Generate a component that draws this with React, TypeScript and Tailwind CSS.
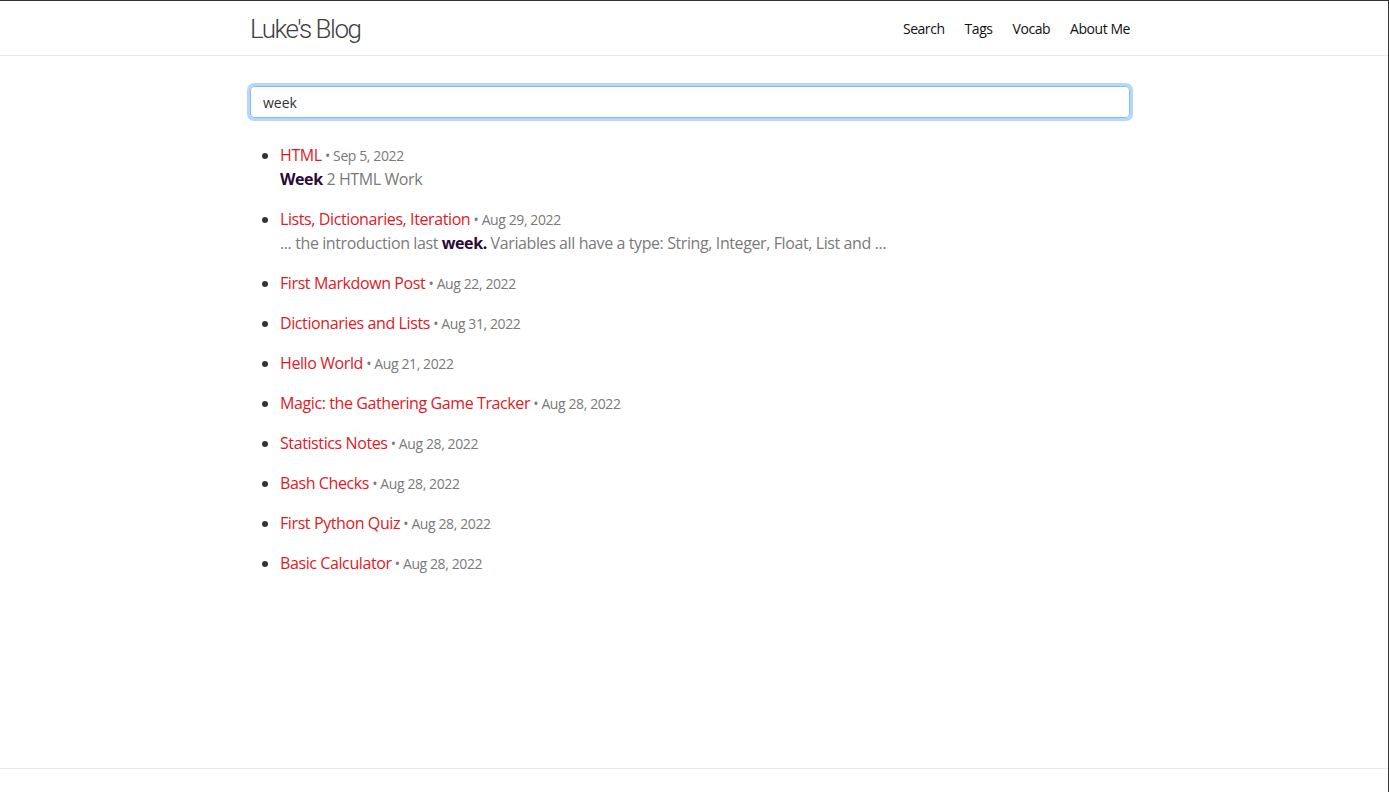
import { useState } from "react";

type Post = {
  title: string;
  date: string;
  snippet?: React.ReactNode;
};

const posts: Post[] = [
  {
    title: "HTML",
    date: "Sep 5, 2022",
    snippet: (
      <>
        <b className="font-bold text-[#2a0a36]">Week</b> 2 HTML Work
      </>
    ),
  },
  {
    title: "Lists, Dictionaries, Iteration",
    date: "Aug 29, 2022",
    snippet: (
      <>
        ... the introduction last <b className="font-bold text-[#2a0a36]">week.</b> Variables all have a type: String,
        Integer, Float, List and ...
      </>
    ),
  },
  { title: "First Markdown Post", date: "Aug 22, 2022" },
  { title: "Dictionaries and Lists", date: "Aug 31, 2022" },
  { title: "Hello World", date: "Aug 21, 2022" },
  { title: "Magic: the Gathering Game Tracker", date: "Aug 28, 2022" },
  { title: "Statistics Notes", date: "Aug 28, 2022" },
  { title: "Bash Checks", date: "Aug 28, 2022" },
  { title: "First Python Quiz", date: "Aug 28, 2022" },
  { title: "Basic Calculator", date: "Aug 28, 2022" },
];

const font = "font-['Open_Sans',sans-serif]";

function App() {
  const [query, setQuery] = useState("week");

  return (
    <div className={`min-h-[792px] flex flex-col bg-white text-[#111] border-t border-r border-[#333] ${font}`}>
      <header className="h-[55px] border-b border-[#e8e8e8]">
        <div className="ml-[250px] w-[880px] h-full flex items-center justify-between">
          <a href="#" className="font-['Roboto',sans-serif] text-[26px] font-light text-[#3f3f3f] tracking-[-1.5px] mt-[3px]">
            Luke's Blog
          </a>
          <nav className="flex items-center gap-[20px] text-[14px] text-[#111] tracking-[-0.45px]">
            <a href="#">Search</a>
            <a href="#">Tags</a>
            <a href="#">Vocab</a>
            <a href="#">About Me</a>
          </nav>
        </div>
      </header>

      <main className="flex-1 pt-[30px]">
        <div className="ml-[250px] w-[880px]">
          <input
            value={query}
            onChange={(e) => setQuery(e.target.value)}
            autoFocus
            className="w-full h-[32px] px-[12px] text-[14px] text-[#333] rounded-[4px] border border-[#80bdff] ring-[3px] ring-[#b9d6f9] outline-none"
          />
          <ul className="mt-[25px] ml-[30px] list-disc marker:text-[#333]">
            {posts.map((p) => (
              <li key={p.title} className="mb-[16px] leading-[24px] text-[16px] tracking-[-0.4px]">
                <a href="#" className="text-[#e0191f]">
                  {p.title}
                </a>
                <span className="text-[14px] leading-none text-[#7a7a7a]"> • {p.date}</span>
                {p.snippet && <p className="text-[#7a7a7a]">{p.snippet}</p>}
              </li>
            ))}
          </ul>
        </div>
      </main>

      <footer className="h-[24px] border-t border-[#e8e8e8]" />
    </div>
  );
}

export default App;
